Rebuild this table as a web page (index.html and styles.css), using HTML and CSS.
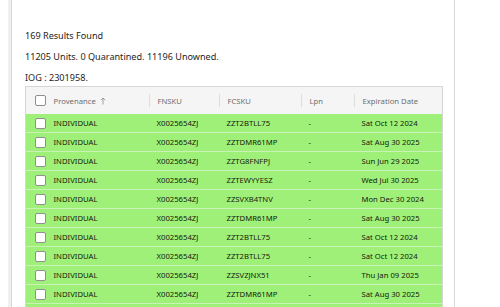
FILE: index.html
```html
<!DOCTYPE html>
<html>
<head>
<meta charset="utf-8">
<link rel="stylesheet" href="styles.css">
</head>
<body>
<div class="panel">
  <div class="summary">
    <p>169 Results Found</p>
    <p>11205 Units. 0 Quarantined. 11196 Unowned.</p>
    <p>IOG : 2301958.</p>
  </div>
  <table class="grid">
    <colgroup>
      <col class="c-check"><col class="c-prov"><col class="c-fnsku"><col class="c-fcsku"><col class="c-lpn"><col class="c-exp">
    </colgroup>
    <thead>
      <tr>
        <th class="chk"><span class="box"></span></th>
        <th><span class="lbl">Provenance <svg class="sort" width="6" height="8" viewBox="0 0 6 8"><path d="M3 7.5V1M0.8 3.2L3 1l2.2 2.2" fill="none" stroke="#8a8a8a" stroke-width="0.8"/></svg></span></th>
        <th><span class="lbl sep">FNSKU</span></th>
        <th><span class="lbl sep">FCSKU</span></th>
        <th><span class="lbl sep">Lpn</span></th>
        <th><span class="lbl sep">Expiration Date</span></th>
      </tr>
    </thead>
    <tbody>
      <tr><td class="chk"><span class="box"></span></td><td>INDIVIDUAL</td><td>X0025654ZJ</td><td>ZZT2BTLL75</td><td>-</td><td>Sat Oct 12 2024</td></tr>
      <tr><td class="chk"><span class="box"></span></td><td>INDIVIDUAL</td><td>X0025654ZJ</td><td>ZZTDMR61MP</td><td>-</td><td>Sat Aug 30 2025</td></tr>
      <tr><td class="chk"><span class="box"></span></td><td>INDIVIDUAL</td><td>X0025654ZJ</td><td>ZZTG8FNFPJ</td><td>-</td><td>Sun Jun 29 2025</td></tr>
      <tr><td class="chk"><span class="box"></span></td><td>INDIVIDUAL</td><td>X0025654ZJ</td><td>ZZTEWYYESZ</td><td>-</td><td>Wed Jul 30 2025</td></tr>
      <tr><td class="chk"><span class="box"></span></td><td>INDIVIDUAL</td><td>X0025654ZJ</td><td>ZZSVXB4TNV</td><td>-</td><td>Mon Dec 30 2024</td></tr>
      <tr><td class="chk"><span class="box"></span></td><td>INDIVIDUAL</td><td>X0025654ZJ</td><td>ZZTDMR61MP</td><td>-</td><td>Sat Aug 30 2025</td></tr>
      <tr><td class="chk"><span class="box"></span></td><td>INDIVIDUAL</td><td>X0025654ZJ</td><td>ZZT2BTLL75</td><td>-</td><td>Sat Oct 12 2024</td></tr>
      <tr><td class="chk"><span class="box"></span></td><td>INDIVIDUAL</td><td>X0025654ZJ</td><td>ZZT2BTLL75</td><td>-</td><td>Sat Oct 12 2024</td></tr>
      <tr><td class="chk"><span class="box"></span></td><td>INDIVIDUAL</td><td>X0025654ZJ</td><td>ZZSVZJNX51</td><td>-</td><td>Thu Jan 09 2025</td></tr>
      <tr><td class="chk"><span class="box"></span></td><td>INDIVIDUAL</td><td>X0025654ZJ</td><td>ZZTDMR61MP</td><td>-</td><td>Sat Aug 30 2025</td></tr>
      <tr><td class="chk"></td><td></td><td></td><td></td><td></td><td></td></tr>
    </tbody>
  </table>
</div>
</body>
</html>
```

FILE: styles.css
```css
html, body {
  margin: 0;
  padding: 0;
  background: #ffffff;
  height: 307px;
  overflow: hidden;
}
body {
  font-family: "Noto Sans", "Open Sans", sans-serif;
  color: #222;
}
.panel {
  margin-left: 11px;
  width: 444px;
  min-height: 307px;
  border-left: 1px solid #d8d8d8;
  border-right: 1px solid #d8d8d8;
  box-shadow: -3px 0 0 #efefef;
  padding-left: 13px;
  box-sizing: border-box;
}
.summary {
  padding-top: 29px;
  font-size: 9.1px;
  color: #1e1e1e;
}
.summary p {
  margin: 0 0 8px 0;
  line-height: 13px;
}
.summary p:last-child {
  margin-bottom: 2px;
}
.grid {
  width: 417px;
  border-collapse: collapse;
  border: 1px solid #d6d6d6;
  table-layout: fixed;
  font-size: 7.7px;
}
.c-check { width: 20px; }
.c-prov { width: 103px; }
.c-fnsku { width: 70px; }
.c-fcsku { width: 82px; }
.c-lpn { width: 53px; }
.c-exp { width: 89px; }
.grid th {
  background: #f5f5f5;
  height: 27px;
  padding: 0;
  text-align: left;
  font-weight: normal;
  color: #6e6e6e;
}
.grid th .lbl {
  display: flex;
  align-items: center;
  gap: 3px;
  height: 13px;
  padding-left: 8px;
}
.grid th .sep {
  border-left: 1px solid #dedede;
}
.grid th:nth-child(2) .lbl {
  padding-left: 8px;
  gap: 4px;
}
.sort { display: block; }
.grid td {
  background: #9ff078;
  height: 18px;
  padding: 0 0 0 8px;
  border-bottom: 1px solid #c9f2b6;
  color: #15220d;
  white-space: nowrap;
  overflow: hidden;
}
.grid .chk {
  padding: 0 0 0 9px;
}
.box {
  display: block;
  width: 9px;
  height: 9px;
  border: 1px solid #8f8f8f;
  border-radius: 2px;
  background: #fff;
}
```
